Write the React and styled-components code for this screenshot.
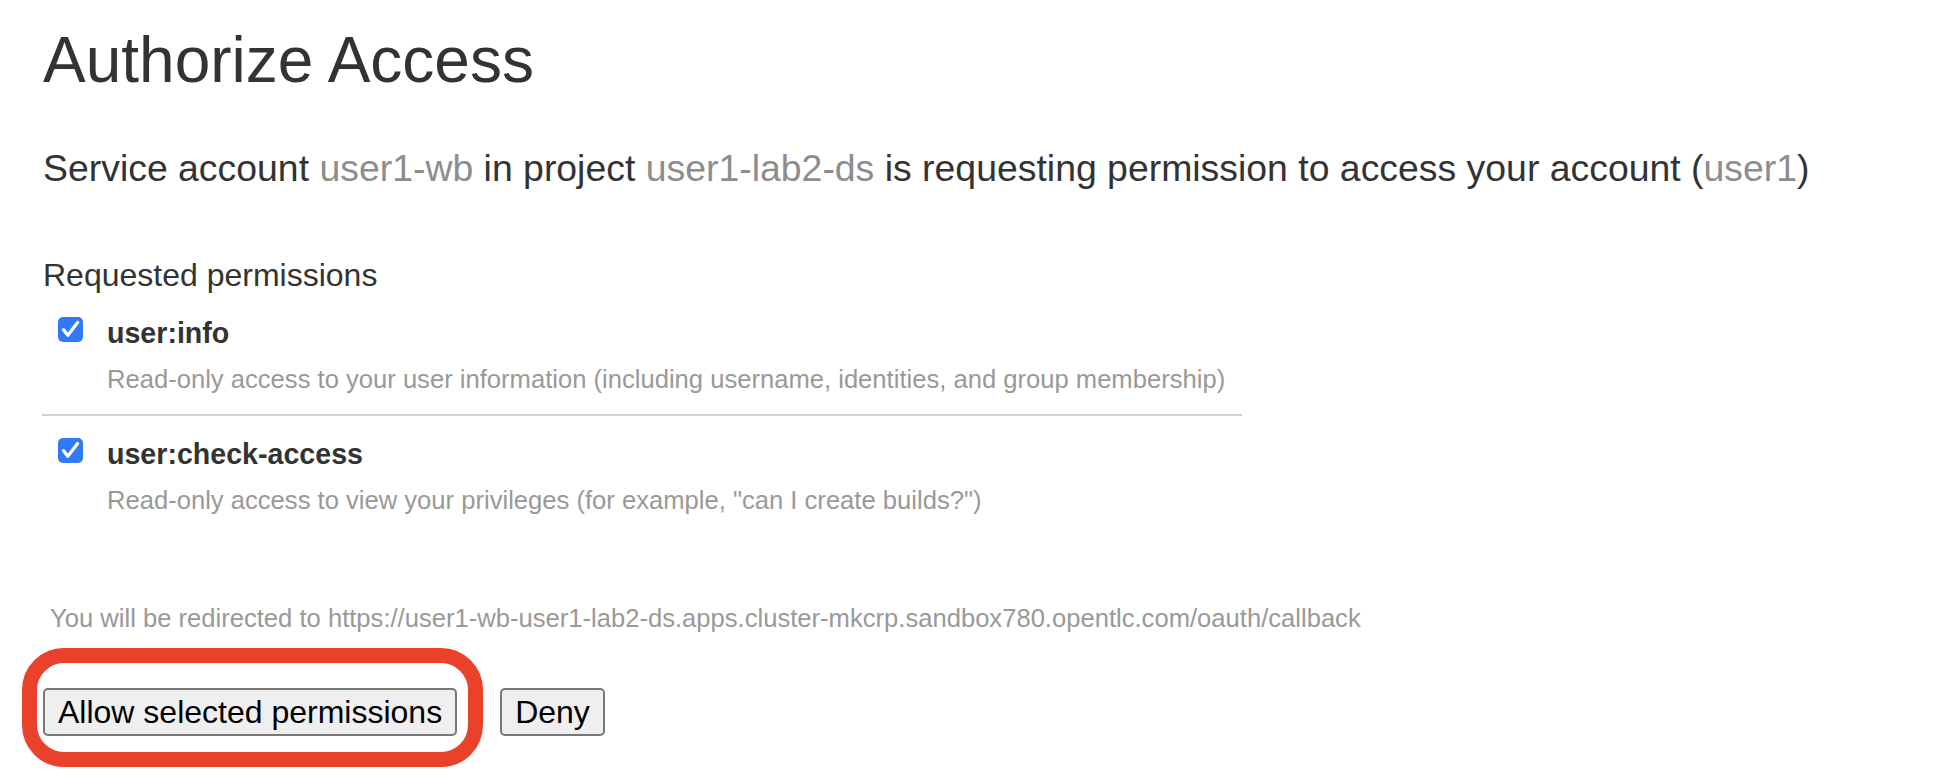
import styled, { createGlobalStyle } from "styled-components";

const GlobalStyle = createGlobalStyle`
  html, body {
    margin: 0;
    padding: 0;
    background: #fff;
  }
  body {
    font-family: "Liberation Sans", Arial, Helvetica, sans-serif;
    color: #333;
    overflow: hidden;
  }
`;

const permissions = [
  {
    name: "user:info",
    description:
      "Read-only access to your user information (including username, identities, and group membership)",
  },
  {
    name: "user:check-access",
    description:
      'Read-only access to view your privileges (for example, "can I create builds?")',
  },
];

const CheckIcon = () => (
  <svg width="25" height="25" viewBox="0 0 25 25">
    <polyline
      points="5.5,12.8 9.8,18.2 19.6,5.6"
      fill="none"
      stroke="#fff"
      strokeWidth="3.3"
      strokeLinecap="round"
      strokeLinejoin="round"
    />
  </svg>
);

const App = () => {
  return (
    <>
      <GlobalStyle />
      <Page>
        <Title>Authorize Access</Title>
        <Intro>
          Service account <Muted>user1-wb</Muted> in project{" "}
          <Muted>user1-lab2-ds</Muted> is requesting permission to access your
          account (<Muted>user1</Muted>)
        </Intro>

        <SectionTitle>Requested permissions</SectionTitle>
        <PermissionList>
          {permissions.map((p) => (
            <PermissionItem key={p.name}>
              <Checkbox>
                <CheckIcon />
              </Checkbox>
              <PermissionText>
                <PermissionName>{p.name}</PermissionName>
                <PermissionDesc>{p.description}</PermissionDesc>
              </PermissionText>
            </PermissionItem>
          ))}
        </PermissionList>

        <Redirect>
          You will be redirected to
          https://user1-wb-user1-lab2-ds.apps.cluster-mkcrp.sandbox780.opentlc.com/oauth/callback
        </Redirect>

        <Actions>
          <Highlight>
            <Button>Allow selected permissions</Button>
            <Ring />
          </Highlight>
          <Button>Deny</Button>
        </Actions>
      </Page>
    </>
  );
};

const Page = styled.div`
  padding: 28px 0 40px 43px;
  display: flex;
  flex-direction: column;
  align-items: flex-start;
`;

const Title = styled.h1`
  margin: 0;
  font-size: 64px;
  line-height: 64px;
  font-weight: 400;
  color: #333;
`;

const Intro = styled.p`
  margin: 54px 0 0;
  font-size: 37.4px;
  line-height: 44px;
  color: #333;
  white-space: nowrap;
`;

const Muted = styled.span`
  color: #8d8d8d;
`;

const SectionTitle = styled.h2`
  margin: 66px 0 0;
  font-size: 32px;
  line-height: 38px;
  font-weight: 400;
  color: #333;
`;

const PermissionList = styled.div`
  width: 1200px;
  margin: 23px 0 0 -1px;
  display: flex;
  flex-direction: column;
`;

const PermissionItem = styled.div`
  display: flex;
  align-items: flex-start;
  padding-left: 16px;

  & + & {
    margin-top: 20px;
    padding-top: 22px;
    border-top: 2px solid #d4d4d4;
  }
`;

const Checkbox = styled.span`
  width: 25px;
  height: 25px;
  flex-shrink: 0;
  border-radius: 5px;
  background: #3179f5;
  display: flex;
  align-items: center;
  justify-content: center;
`;

const PermissionText = styled.div`
  margin-left: 24px;
  display: flex;
  flex-direction: column;
`;

const PermissionName = styled.div`
  font-size: 28.6px;
  line-height: 32px;
  font-weight: 700;
  color: #333;
`;

const PermissionDesc = styled.div`
  margin-top: 15px;
  font-size: 25.6px;
  line-height: 30px;
  color: #999;
  white-space: nowrap;
`;

const Redirect = styled.div`
  margin-top: 88px;
  padding-left: 7px;
  font-size: 25.6px;
  line-height: 30px;
  color: #999;
  white-space: nowrap;
`;

const Actions = styled.div`
  margin-top: 55px;
  display: flex;
  align-items: center;
  gap: 43px;
`;

const Highlight = styled.div`
  position: relative;
  display: flex;
`;

const Ring = styled.span`
  position: absolute;
  top: -40px;
  left: -21px;
  right: -26px;
  bottom: -31px;
  border: 15px solid #ea412a;
  border-radius: 42px;
  pointer-events: none;
`;

const Button = styled.button`
  height: 48px;
  padding: 0 13px;
  border: 2px solid #777;
  border-radius: 5px;
  background: #efefef;
  font-family: "Liberation Sans", Arial, Helvetica, sans-serif;
  font-size: 32px;
  line-height: 44px;
  color: #000;
  cursor: pointer;
`;

export default App;
